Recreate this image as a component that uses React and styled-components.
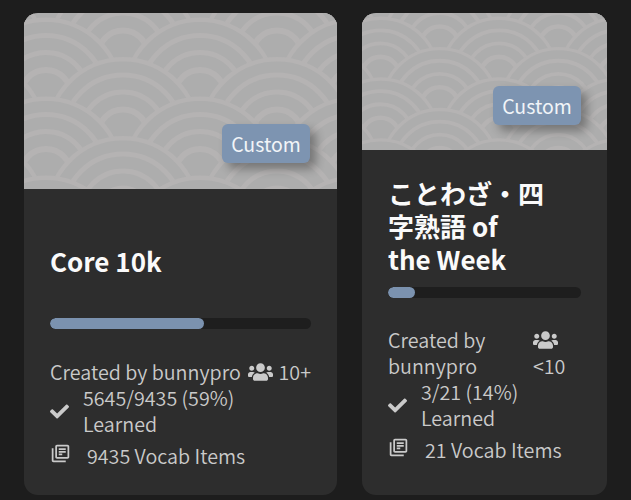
import React from "react";
import styled, { createGlobalStyle } from "styled-components";
import { FaUsers, FaCheck } from "react-icons/fa";
import { MdOutlineLibraryBooks } from "react-icons/md";

const Global = createGlobalStyle`
  html, body { margin: 0; padding: 0; background: #1d1d1d; }
  body { width: 631px; height: 500px; overflow: hidden; font-family: "Noto Sans CJK JP", "Noto Sans", sans-serif; }
`;

const Page = styled.main`
  display: flex;
  gap: 25px;
  padding: 13px 0 5px 24px;
  box-sizing: border-box;
  height: 500px;
`;

const Card = styled.article`
  width: ${(p) => p.$width}px;
  height: 482px;
  background: #2d2d2d;
  border-radius: 14px;
  overflow: hidden;
  display: flex;
  flex-direction: column;
`;

const Banner = styled.div`
  position: relative;
  height: ${(p) => p.$height}px;
  flex: none;
  overflow: hidden;
  background: #adadad;
`;

const Waves = styled.svg`
  display: block;
  width: 100%;
  height: 100%;
`;

const Badge = styled.span`
  position: absolute;
  right: ${(p) => p.$right}px;
  bottom: ${(p) => p.$bottom}px;
  width: 88px;
  height: 39px;
  display: flex;
  align-items: center;
  justify-content: center;
  border-radius: 6px;
  background: #7d94b1;
  color: #f1f4f8;
  font-size: 19.5px;
  box-shadow: 6px 6px 10px rgba(0, 0, 0, 0.32);
`;

const Body = styled.div`
  display: flex;
  flex-direction: column;
  padding: ${(p) => p.$top}px 26px 0;
`;

const Title = styled.h2`
  margin: 0;
  height: 99px;
  display: flex;
  align-items: center;
  color: #fafafa;
  font-size: 26px;
  line-height: 33px;
  font-weight: 700;
`;

const Track = styled.div`
  margin-top: ${(p) => p.$top}px;
  height: 11px;
  border-radius: 6px;
  background: #1e1e1e;
  overflow: hidden;
  flex: none;
`;

const Fill = styled.div`
  height: 100%;
  border-radius: 6px;
  background: #7b92af;
`;

const Creator = styled.div`
  margin-top: ${(p) => p.$top}px;
  display: flex;
  justify-content: space-between;
  color: #cacaca;
  font-size: 19.7px;
  line-height: 26px;
  font-weight: 350;
  white-space: nowrap;
`;

const Members = styled.div`
  display: flex;
  flex-direction: ${(p) => (p.$stacked ? "column" : "row")};
  align-items: ${(p) => (p.$stacked ? "flex-start" : "center")};
  gap: ${(p) => (p.$stacked ? 0 : 6)}px;
  width: ${(p) => (p.$stacked ? "48px" : "auto")};
  flex: none;
`;

const MembersIcon = styled(FaUsers)`
  width: 25px;
  height: 20px;
  flex: none;
  margin: ${(p) => (p.$stacked ? "3px 0" : "0")};
`;

const StatRow = styled.div`
  display: flex;
  align-items: center;
  color: #cacaca;
  font-size: 19.7px;
  line-height: 26px;
  font-weight: 350;
`;

const CheckIcon = styled(FaCheck)`
  width: 19px;
  height: 19px;
  margin-right: 14px;
  flex: none;
`;

const VocabRow = styled(StatRow)`
  margin-top: ${(p) => p.$top}px;
`;

const BooksIcon = styled(MdOutlineLibraryBooks)`
  width: 21px;
  height: 21px;
  margin: -5px 16px 0 0;
  flex: none;
`;

const R = 77.5;
const LIGHT = "#b5b3b3";
const DARK = "#adadad";
const RINGS = [
  [73, 62],
  [57, 45],
  [40, 28],
  [22, 0],
];

function Seigaiha({ width, height, scale, x0, y0 }) {
  const scales = [];
  for (let row = 0; row < 9; row++) {
    const peak = y0 + row * 39.5;
    const shift = row % 2 ? 77 : 0;
    for (let col = -1; col < 4; col++) {
      const cx = x0 + shift + col * 154;
      const cy = peak + R;
      scales.push(
        <g key={`${row}-${col}`}>
          <circle cx={cx} cy={cy} r={R} fill={LIGHT} />
          {RINGS.map(([outer, inner]) => (
            <circle
              key={outer}
              cx={cx}
              cy={cy}
              r={(outer + inner) / 2}
              fill={inner === 0 ? DARK : "none"}
              stroke={DARK}
              strokeWidth={outer - inner}
            />
          ))}
        </g>
      );
    }
  }
  return (
    <Waves viewBox={`0 0 ${width / scale} ${height / scale}`} preserveAspectRatio="xMinYMin slice">
      {scales}
    </Waves>
  );
}

function Deck({ width, bannerHeight, scale, x0, y0, bodyTop, title, pct, stacked, creator, members, learned, vocab, vocabTop, trackTop, creatorTop, badgeRight, badgeBottom }) {
  return (
    <Card $width={width}>
      <Banner $height={bannerHeight}>
        <Seigaiha width={width} height={bannerHeight} scale={scale} x0={x0} y0={y0} />
        <Badge $right={badgeRight} $bottom={badgeBottom}>Custom</Badge>
      </Banner>
      <Body $top={bodyTop}>
        <Title>{title}</Title>
        <Track $top={trackTop}>
          <Fill style={{ width: `${pct}%` }} />
        </Track>
        <Creator $top={creatorTop}>
          <span>{creator}</span>
          <Members $stacked={stacked}>
            <MembersIcon $stacked={stacked} />
            <span>{members}</span>
          </Members>
        </Creator>
        <StatRow>
          <CheckIcon />
          <span>{learned}<br />Learned</span>
        </StatRow>
        <VocabRow $top={vocabTop}>
          <BooksIcon />
          <span>{vocab}</span>
        </VocabRow>
      </Body>
    </Card>
  );
}

export default function App() {
  return (
    <>
      <Global />
      <Page>
        <Deck
          width={313}
          bannerHeight={176}
          scale={1}
          x0={99}
          y0={-35}
          bodyTop={22}
          trackTop={8}
          creatorTop={30}
          badgeRight={27}
          badgeBottom={26}
          title="Core 10k"
          pct={59}
          creator="Created by bunnypro"
          members="10+"
          learned="5645/9435 (59%)"
          vocab="9435 Vocab Items"
          vocabTop={6}
        />
        <Deck
          width={245}
          bannerHeight={137}
          scale={0.77}
          x0={101}
          y0={-35}
          bodyTop={26}
          trackTop={12}
          creatorTop={29}
          badgeRight={26}
          badgeBottom={25}
          title={<span>ことわざ・四<br />字熟語 of<br />the Week</span>}
          pct={14}
          stacked
          creator={<>Created by<br />bunnypro</>}
          members="<10"
          learned="3/21 (14%)"
          vocab="21 Vocab Items"
          vocabTop={6}
        />
      </Page>
    </>
  );
}
